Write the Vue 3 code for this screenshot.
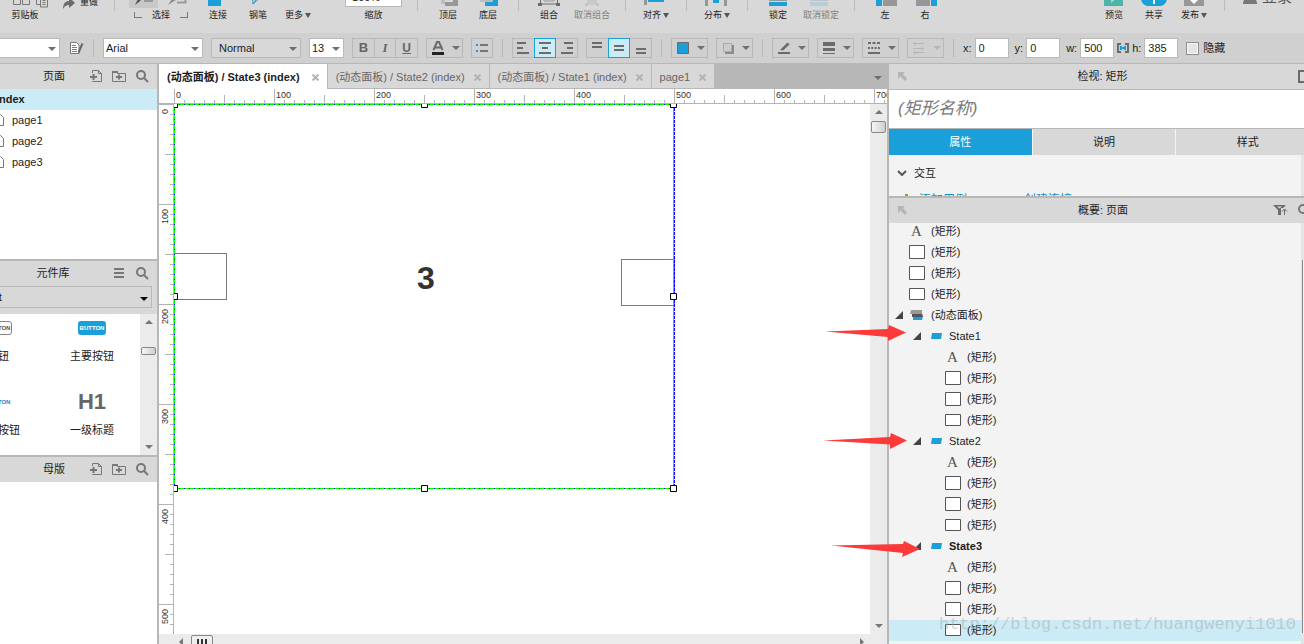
<script setup>
import { ref } from 'vue'

const BLUE = '#1b9fd9'
const GRAY = '#979797'
const DARK = '#6b6b6b'
const LIGHT = '#bdbdbd'

const drawTools = [
  { label: '连接', shapes: [{ d: 'M10 -12h13v18h-13z', fill: BLUE }] },
  { label: '钢笔', shapes: [{ d: 'M14 -10L15 4L23 -3L21 -10M15 4L20 -3', stroke: BLUE }] },
  { label: '更多', caret: true, shapes: [] },
]

const layerTools = [
  [
    { label: '顶层', shapes: [{ d: 'M13 -8h12v12h-12z', fill: LIGHT }, { d: 'M17 -8h13v14h-13z', fill: GRAY }, { d: 'M17 0h8v2h-8z', fill: '#d8d8d8' }] },
    { label: '底层', shapes: [{ d: 'M17 -8h13v14h-13z', fill: BLUE }, { d: 'M12 -8h13v10h-13z', fill: LIGHT }, { d: 'M14 -8h12v8h-12z', fill: GRAY }] },
  ],
  [
    { label: '组合', shapes: [{ d: 'M11.500 -10v14h17v-14', stroke: DARK }, { d: 'M9 3h4v3h-4zM27 3h4v3h-4z', fill: DARK }, { d: 'M15 -8h10v9h-10z', stroke: GRAY }] },
    { label: '取消组合', disabled: true, shapes: [{ d: 'M15 -6h10v11h-10z', fill: '#c9c9c9' }, { d: 'M13 3h3v3h-3zM24 3h3v3h-3z', fill: '#c3c3c3' }] },
  ],
  [{ label: '对齐', caret: true, shapes: [{ d: 'M8 -12h3v17h-3z', fill: GRAY }, { d: 'M12 -3h16v5h-16z', fill: BLUE }] }],
  [{ label: '分布', caret: true, shapes: [{ d: 'M8 -12h3v18h-3zM27 -12h3v18h-3z', fill: GRAY }, { d: 'M16 -8h6v11h-6z', fill: BLUE }] }],
  [
    { label: '锁定', shapes: [{ d: 'M11 -4h18v5h-18z', fill: GRAY }, { d: 'M11 2h18v4h-18z', fill: BLUE }] },
    { label: '取消锁定', disabled: true, shapes: [{ d: 'M9 -4h18v5h-18z', fill: '#c3c3c3' }, { d: 'M9 2h18v4h-18z', fill: '#b2cfdd' }] },
  ],
]

const dockTools = [
  { label: '左', shapes: [{ d: 'M11 -8h6v14h-6z', fill: BLUE }, { d: 'M18 -8h14v14h-14z', fill: GRAY }] },
  { label: '右', shapes: [{ d: 'M11 -8h14v14h-14z', fill: GRAY }, { d: 'M26 -8h6v14h-6z', fill: BLUE }] },
]

const publishTools = [
  { label: '预览', shapes: [{ d: 'M10 -12h19v18h-19z', fill: '#4eb3a8' }, { d: 'M17 -6l6 4l-6 5z', fill: '#a8d9d3' }] },
  { label: '共享', shapes: [{ d: 'M7 -2a8 8 0 0 1 26 0a7 8 0 0 1 -6 8h-14a7 8 0 0 1 -6 -8z', fill: BLUE }, { d: 'M19 -6h2v10h-2z', fill: '#fff' }] },
  { label: '发布', caret: true, shapes: [{ d: 'M10 -12h20v18h-20z', fill: GRAY }, { d: 'M15 -1h3v-5h4v5h3l-5 5z', fill: '#fff' }] },
]

const pages = ['page1', 'page2', 'page3']

const tabs = [
  { name: '(动态面板) / State3 (index)', active: true },
  { name: '(动态面板) / State2 (index)' },
  { name: '(动态面板) / State1 (index)' },
  { name: 'page1' },
]

const RULER = 2400
const range = (step) => Array.from({ length: RULER / step + 1 }, (_, i) => i * step)
const tickLength = (v) => (v % 100 === 0 ? 15 : v % 50 === 0 ? 9 : 4)
const topTicks = range(10).map((v) => `M${v} 15h1v-${tickLength(v)}h-1z`).join('')
const sideTicks = range(10).map((v) => `M15 ${v}v1h-${tickLength(v)}v-1z`).join('')
const marks = range(100)

const children = (level, selectLast) => [
  { level, icon: 'text', label: '(矩形)' },
  { level, icon: 'box', label: '(矩形)' },
  { level, icon: 'box', label: '(矩形)' },
  { level, icon: 'flat', label: '(矩形)', selected: selectLast },
]
const outline = [
  ...children(0),
  { level: 0, icon: 'panel', label: '(动态面板)', open: true },
  { level: 1, icon: 'state', label: 'State1', open: true },
  ...children(2),
  { level: 1, icon: 'state', label: 'State2', open: true },
  ...children(2),
  { level: 1, icon: 'state', label: 'State3', open: true, bold: true },
  ...children(2, true),
]

const geometry = ref({ x: '0', y: '0', w: '500', h: '385' })
const zoomLevel = ref('100%')
const widgetName = ref('')
const hidden = ref(false)
</script>

<template>
  <div class="app">
    <header class="tools">
      <button class="tool clip">
        <svg width="50" height="23" viewBox="0 -14 50 23">
          <path d="M13.500 -8v12.500h7v-12.500M22.500 -8v12.500h7v-12.500" fill="none" stroke="#777" />
          <path d="M36.500 -6v10.500h4M40.500 -4v11h7v-11M42.500 .5h3M42.500 2.500h3M42.500 4.500h3" fill="none" stroke="#777" />
        </svg>
        <span>剪贴板</span>
      </button>
      <button class="redo">
        <svg width="12" height="14" viewBox="0 0 12 14"><path d="M0 14c0-5 2-8 6-8V2l6 6l-6 5V10c-3 0-4 1-6 4z" fill="#6b6b6b" /></svg>
        <span>重做</span>
      </button>
      <i class="rule"></i>
      <button class="tool select-tool">
        <svg width="64" height="23" viewBox="0 -14 64 23">
          <path d="M0 -14h29v22h-29z" fill="#c8c8c8" />
          <path d="M6 5l3-6l-1-6l8 6l-4 1l-2 2z" fill="#555" />
          <path d="M15 -6h9v8h-9z" fill="#999" />
          <path d="M39 5l4-6v-6l7 6l-3 1l-2 1z" fill="#888" />
          <path d="M48 2.500h8.500v-6" fill="none" stroke="#999" stroke-width="2" />
        </svg>
        <span class="brackets"><i class="bracket"></i>选择<i class="bracket flip"></i></span>
      </button>
      <button v-for="t in drawTools" :key="t.label" class="tool">
        <svg width="40" height="23" viewBox="0 -14 40 23">
          <path v-for="(s, i) in t.shapes" :key="i" :d="s.d" :fill="s.fill || 'none'" :stroke="s.stroke || 'none'" />
        </svg>
        <span>{{ t.label }}<i v-if="t.caret" class="mini-caret"></i></span>
      </button>
      <label class="zoom">
        <input v-model="zoomLevel" />
        <span>缩放</span>
      </label>
      <template v-for="(group, g) in layerTools" :key="g">
        <i class="rule"></i>
        <button v-for="t in group" :key="t.label" class="tool" :class="{ disabled: t.disabled }" :disabled="t.disabled">
          <svg width="40" height="23" viewBox="0 -14 40 23">
            <path v-for="(s, i) in t.shapes" :key="i" :d="s.d" :fill="s.fill || 'none'" :stroke="s.stroke || 'none'" />
          </svg>
          <span>{{ t.label }}<i v-if="t.caret" class="mini-caret"></i></span>
        </button>
      </template>
      <i class="rule"></i>
      <button v-for="t in dockTools" :key="t.label" class="tool">
        <svg width="40" height="23" viewBox="0 -14 40 23">
          <path v-for="(s, i) in t.shapes" :key="i" :d="s.d" :fill="s.fill" />
        </svg>
        <span>{{ t.label }}</span>
      </button>
      <div class="publish">
        <button v-for="t in publishTools" :key="t.label" class="tool">
          <svg width="40" height="23" viewBox="0 -14 40 23">
            <path v-for="(s, i) in t.shapes" :key="i" :d="s.d" :fill="s.fill" />
          </svg>
          <span>{{ t.label }}<i v-if="t.caret" class="mini-caret"></i></span>
        </button>
        <i class="rule"></i>
        <button class="login">
          <svg width="14" height="14" viewBox="0 0 14 14"><circle cx="7" cy="3" r="4" fill="#777" /><path d="M0 13c0-5 3-6 7-6s7 1 7 6z" fill="#777" /></svg>
          <span>登录</span>
        </button>
      </div>
    </header>

    <div class="format">
      <span class="pick style-pick"><select aria-label="样式"><option></option></select></span>
      <button class="plain" aria-label="样式管理">
        <svg width="15" height="14" viewBox="0 0 15 14">
          <path d="M1.500 1.500h6l2.500 2.500v8.500h-8.500z" fill="#fff" stroke="#777" />
          <path d="M3 4.500h4M3 6.500h5M3 8.500h5M3 10.500h5" stroke="#1b9fd9" />
          <path d="M13.500 2.500l-4 9" stroke="#666" stroke-width="2" />
        </svg>
      </button>
      <i class="bar"></i>
      <span class="pick font"><select aria-label="字体"><option>Arial</option></select></span>
      <span class="pick weight"><select aria-label="字重"><option>Normal</option></select></span>
      <span class="pick size"><select aria-label="字号"><option>13</option></select></span>
      <div class="group letters">
        <button class="b">B</button>
        <button class="i">I</button>
        <button class="u">U</button>
      </div>
      <button class="drop" aria-label="文字颜色">
        <svg width="14" height="14" viewBox="0 0 14 14"><path d="M2.500 9L6 1h2l3.500 8M4 6.500h6" fill="none" stroke="#6b6b6b" stroke-width="2" /><path d="M1 11h12v3h-12z" fill="#222" /></svg>
        <i class="caret"></i>
      </button>
      <button class="square" aria-label="项目符号">
        <svg width="14" height="10" viewBox="0 0 14 10"><path d="M1 1h2v2h-2zM1 7h2v2h-2z" fill="#1b9fd9" /><path d="M5 1h8v2h-8zM5 7h8v2h-8z" fill="#777" /></svg>
      </button>
      <i class="bar"></i>
      <div class="group">
        <button aria-label="左对齐"><svg width="14" height="14" viewBox="0 0 14 14"><path d="M1 2h9M1 7h6M1 12h12" stroke="#6b6b6b" stroke-width="2" /></svg></button>
        <button class="on" aria-label="居中"><svg width="14" height="14" viewBox="0 0 14 14"><path d="M1 2h12M4 7h6M1 12h12" stroke="#6b6b6b" stroke-width="2" /></svg></button>
        <button aria-label="右对齐"><svg width="14" height="14" viewBox="0 0 14 14"><path d="M4 2h9M7 7h6M1 12h12" stroke="#6b6b6b" stroke-width="2" /></svg></button>
      </div>
      <div class="group">
        <button aria-label="顶部对齐"><svg width="12" height="14" viewBox="0 0 12 14"><path d="M1 2h10M1 6h10" stroke="#6b6b6b" stroke-width="2" /></svg></button>
        <button class="on" aria-label="垂直居中"><svg width="12" height="14" viewBox="0 0 12 14"><path d="M1 5h10M1 9h10" stroke="#6b6b6b" stroke-width="2" /></svg></button>
        <button aria-label="底部对齐"><svg width="12" height="14" viewBox="0 0 12 14"><path d="M1 8h10M1 12h10" stroke="#6b6b6b" stroke-width="2" /></svg></button>
      </div>
      <i class="bar"></i>
      <button class="drop" aria-label="填充">
        <svg width="14" height="14" viewBox="0 0 14 14"><path d="M1.500 1.500h11v11h-11z" fill="#1b9fd9" stroke="#6b6b6b" /></svg>
        <i class="caret"></i>
      </button>
      <button class="drop" aria-label="阴影">
        <svg width="14" height="14" viewBox="0 0 14 14"><path d="M4 4h9v9h-9z" fill="#8a8a8a" /><path d="M2.500 2.500h8v8h-8z" fill="#ccc" stroke="#aaa" /></svg>
        <i class="caret"></i>
      </button>
      <i class="bar"></i>
      <button class="drop" aria-label="线条颜色">
        <svg width="14" height="14" viewBox="0 0 14 14"><path d="M3 9L10.500 1.500l2 2L6 9.500z" fill="#6b6b6b" /><path d="M1 11h12v2h-12z" fill="#6b6b6b" /></svg>
        <i class="caret"></i>
      </button>
      <button class="drop" aria-label="线宽">
        <svg width="14" height="14" viewBox="0 0 14 14"><path d="M1 1h12v4h-12zM1 7h12v3h-12zM1 12h12v1h-12z" fill="#6b6b6b" /></svg>
        <i class="caret"></i>
      </button>
      <button class="drop" aria-label="线型">
        <svg width="14" height="14" viewBox="0 0 14 14"><path d="M1 2h12" stroke="#6b6b6b" stroke-width="2" stroke-dasharray="3 1.500" /><path d="M1 7h12" stroke="#6b6b6b" stroke-width="2" stroke-dasharray="2 1.300" /><path d="M1 12h12" stroke="#6b6b6b" stroke-width="2" /></svg>
        <i class="caret"></i>
      </button>
      <button class="drop off" aria-label="箭头" disabled>
        <svg width="14" height="14" viewBox="0 0 14 14"><path d="M1 2.500h11M1 7.500h11M1 11.500h11M3 .5v4M10 5.500v4M3 9.500v4" stroke="#b5b5b5" fill="none" /></svg>
        <i class="caret"></i>
      </button>
      <i class="bar"></i>
      <div class="coords">
        <label>x:<input v-model="geometry.x" /></label>
        <label>y:<input v-model="geometry.y" /></label>
        <label>w:<input v-model="geometry.w" /></label>
        <svg class="link" width="12" height="10" viewBox="0 0 12 10"><path d="M4 1h-3v8h3M8 1h3v8h-3" fill="none" stroke="#6b6b6b" stroke-width="2" /><path d="M3 3v4h2v-1h2v1h2v-4h-2v1h-2v-1z" fill="#1b9fd9" /></svg>
        <label>h:<input v-model="geometry.h" /></label>
      </div>
      <label class="hide"><input v-model="hidden" type="checkbox" />隐藏</label>
    </div>

    <main class="body">
      <aside class="left">
        <section class="pages">
          <div class="head">
            <h2>页面</h2>
            <button aria-label="添加页面"><svg width="14" height="14" viewBox="0 0 14 14"><path d="M3.500 4V1.500h6l3 3v8h-9V12M9.500 1.500v3h3" fill="none" stroke="#777" /><path d="M1 7h7v2h-7zM3.500 5h2v6h-2z" fill="#777" /></svg></button>
            <button aria-label="添加文件夹"><svg width="14" height="14" viewBox="0 0 14 14"><path d="M.5 2.500h5v2h8v8h-13z" fill="none" stroke="#777" /><path d="M.5 2h5v2h-5zM4 7h6v2h-6zM6 5.500h2v5h-2z" fill="#777" /></svg></button>
            <button aria-label="搜索"><svg width="14" height="14" viewBox="0 0 14 14"><circle cx="6" cy="6" r="4" fill="none" stroke="#777" stroke-width="2" /><path d="M9 9l4 4" stroke="#777" stroke-width="2" /></svg></button>
          </div>
          <ul>
            <li class="current">index</li>
            <li v-for="p in pages" :key="p">
              <svg width="10" height="12" viewBox="0 0 10 12"><path d="M1.500 .5h5l3 3v8h-8z" fill="#fff" stroke="#777" /></svg>{{ p }}
            </li>
          </ul>
        </section>
        <section class="library">
          <div class="head">
            <h2>元件库</h2>
            <button aria-label="选项"><svg width="14" height="14" viewBox="0 0 14 14"><path d="M2 3h10M2 7h10M2 11h10" stroke="#777" stroke-width="2" /></svg></button>
            <button aria-label="搜索"><svg width="14" height="14" viewBox="0 0 14 14"><circle cx="6" cy="6" r="4" fill="none" stroke="#777" stroke-width="2" /><path d="M9 9l4 4" stroke="#777" stroke-width="2" /></svg></button>
          </div>
          <div class="source"><span class="pick"><select aria-label="元件库"><option>Default</option></select></span></div>
          <div class="shelf">
            <div class="widgets">
              <figure><div><b class="chip ghost">BUTTON</b></div><figcaption>按钮</figcaption></figure>
              <figure><div><b class="chip">BUTTON</b></div><figcaption>主要按钮</figcaption></figure>
              <figure><div><b class="chip bare">BUTTON</b></div><figcaption>链接按钮</figcaption></figure>
              <figure><div><b class="h1">H1</b></div><figcaption>一级标题</figcaption></figure>
            </div>
            <div class="vscroll"><i class="up"></i><i class="thumb"></i><i class="down"></i></div>
          </div>
        </section>
        <section class="masters">
          <div class="head">
            <h2>母版</h2>
            <button aria-label="添加母版"><svg width="14" height="14" viewBox="0 0 14 14"><path d="M3.500 4V1.500h6l3 3v8h-9V12M9.500 1.500v3h3" fill="none" stroke="#777" /><path d="M1 7h7v2h-7zM3.500 5h2v6h-2z" fill="#777" /></svg></button>
            <button aria-label="添加文件夹"><svg width="14" height="14" viewBox="0 0 14 14"><path d="M.5 2.500h5v2h8v8h-13z" fill="none" stroke="#777" /><path d="M.5 2h5v2h-5zM4 7h6v2h-6zM6 5.500h2v5h-2z" fill="#777" /></svg></button>
            <button aria-label="搜索"><svg width="14" height="14" viewBox="0 0 14 14"><circle cx="6" cy="6" r="4" fill="none" stroke="#777" stroke-width="2" /><path d="M9 9l4 4" stroke="#777" stroke-width="2" /></svg></button>
          </div>
        </section>
      </aside>

      <section class="center">
        <nav class="tabs">
          <button v-for="t in tabs" :key="t.name" :class="{ active: t.active }">
            {{ t.name }}
            <svg width="7" height="7" viewBox="0 0 7 7"><path d="M0.500 0.500l6 6M6.500 0.500l-6 6" stroke="currentColor" stroke-width="2" /></svg>
          </button>
          <i class="caret more"></i>
        </nav>
        <div class="ruler-top">
          <svg :width="RULER" height="15">
            <path :d="topTicks" fill="#b4b4b4" />
            <text v-for="m in marks" :key="m" :x="m + 2" y="9">{{ m }}</text>
          </svg>
        </div>
        <div class="work">
          <div class="ruler-side">
            <svg width="15" :height="RULER">
              <path :d="sideTicks" fill="#b4b4b4" />
              <text v-for="m in marks" :key="m" text-anchor="end" :transform="`translate(9 ${m + 5}) rotate(-90)`">{{ m }}</text>
            </svg>
          </div>
          <div class="canvas">
            <div class="shape prev"></div>
            <div class="shape next"></div>
            <div class="digit">3</div>
            <svg class="selection" width="510" height="395">
              <path d="M0 .5H500M.5 0V385M0 384.500H500M499.500 0V385" fill="none" stroke="#00ff00" />
              <path d="M0 .5H500M.5 0V385M0 384.500H500" fill="none" stroke="#0000ff" stroke-dasharray="1 4" />
              <path d="M500.500 0V385" stroke="#0000ff" stroke-dasharray="3 1" />
              <g fill="#fff" stroke="#000">
                <path d="M-2.500 -2.500h6v6h-6zM247.500 -2.500h6v6h-6zM496.500 -2.500h6v6h-6z" />
                <path d="M-2.500 189.500h6v6h-6zM496.500 189.500h6v6h-6z" />
                <path d="M-2.500 381.500h6v6h-6zM247.500 381.500h6v6h-6zM496.500 381.500h6v6h-6z" />
              </g>
            </svg>
          </div>
          <div class="vscroll wide"><i class="up"></i><i class="thumb"></i><i class="down"></i></div>
        </div>
        <div class="hscroll">
          <i class="back"></i><i class="grip"></i><i class="forward"></i>
        </div>
      </section>

      <aside class="right">
        <div class="sheet">
          <section class="inspector">
            <div class="head">
              <svg width="9" height="9" viewBox="0 0 9 9"><path d="M0 0h7L5 2l4 4.500L7 9L2.500 4.500L0 7z" fill="#b5b5b5" /></svg>
              <h2>检视: 矩形</h2>
              <svg width="13" height="13" viewBox="0 0 13 13"><path d="M1 1h11v11h-11z" fill="none" stroke="#6b6b6b" stroke-width="2" /></svg>
            </div>
            <input v-model="widgetName" class="name" placeholder="(矩形名称)" aria-label="名称" />
            <div class="modes">
              <button class="active">属性</button>
              <button>说明</button>
              <button>样式</button>
            </div>
            <div class="props">
              <h3><svg width="10" height="6" viewBox="0 0 10 6"><path d="M1 1l4 4l4-4" fill="none" stroke="#555" stroke-width="2" /></svg>交互</h3>
              <div class="links">
                <i class="plus"></i>
                <a href="#">添加用例</a>
                <a href="#">创建连接</a>
              </div>
            </div>
          </section>
          <section class="outline">
            <div class="head">
              <svg width="9" height="9" viewBox="0 0 9 9"><path d="M0 0h7L5 2l4 4.500L7 9L2.500 4.500L0 7z" fill="#b5b5b5" /></svg>
              <h2>概要: 页面</h2>
              <svg width="15" height="12" viewBox="0 0 15 12"><path d="M0 1h13l-5 5v5h-3v-5z" fill="#6b6b6b" /><path d="M4 2.500h5l-2.500 2z" fill="#d8d8d8" /><path d="M8 4h6v8h-6z" fill="#d8d8d8" /><path d="M11.500 11V5M9 7.500l2.500-2.500l2.500 2.500" fill="none" stroke="#6b6b6b" /></svg>
              <svg width="14" height="14" viewBox="0 0 14 14"><circle cx="6" cy="6" r="4" fill="none" stroke="#777" stroke-width="2" /><path d="M9 9l4 4" stroke="#777" stroke-width="2" /></svg>
            </div>
            <div class="tree">
              <ul>
                <li v-for="(n, i) in outline" :key="i" :class="['level' + n.level, { selected: n.selected, bold: n.bold }]">
                  <svg class="fold" width="8" height="8" viewBox="0 0 8 8"><path v-if="n.open" d="M8 0v8h-8z" fill="#444" /></svg>
                  <svg class="icon" width="16" height="16" viewBox="0 0 16 16">
                    <text v-if="n.icon === 'text'" x="2" y="13" class="glyph">A</text>
                    <path v-else-if="n.icon === 'box'" d="M.5 1.500h15v13h-15z" fill="#fff" stroke="#555" />
                    <path v-else-if="n.icon === 'flat'" d="M.5 2.500h15v11h-15z" fill="#fff" stroke="#555" />
                    <path v-else-if="n.icon === 'state'" d="M5 5h10l-1 6h-10z" fill="#1b9fd9" />
                    <template v-else>
                      <path d="M4 9h10l-1 4h-9z" fill="#1b9fd9" />
                      <path d="M3 6h10l1 4h-11z" fill="#555" />
                      <path d="M2 3h11v4h-12z" fill="#999" />
                    </template>
                  </svg>
                  <span>{{ n.label }}</span>
                </li>
              </ul>
            </div>
          </section>
        </div>
        <i class="edge first"></i>
        <i class="edge second"></i>
        <div class="watermark">http://blog.csdn.net/huangwenyi1010</div>
      </aside>

      <svg class="arrows" width="100" height="240" viewBox="0 0 100 240" fill="#fc3a3a">
        <path d="M3 11.500L66 9L67 5L84 12.500L66 21L66 17z" />
        <path d="M1 120.500L68 117L69 113L85 120.500L68 129L68 124.500z" />
        <path d="M9 225.500L81 224L82 221L98 229L80 237L81 233z" />
      </svg>
    </main>
  </div>
</template>

<style>
html,
body {
  margin: 0;
  overflow: hidden;
}
</style>

<style scoped>
.app {
  display: flex;
  flex-direction: column;
  height: 100vh;
  overflow: hidden;
  background: #fff;
  color: #1c1c1c;
  font: 11px/14px "Liberation Sans", Arial, "Noto Sans CJK SC", sans-serif;
}
.app * {
  box-sizing: border-box;
}
button,
input,
select {
  margin: 0;
  padding: 0;
  border: 0;
  border-radius: 0;
  background: none;
  color: inherit;
  font: inherit;
  outline: none;
}
h2,
h3,
ul,
figure {
  margin: 0;
  padding: 0;
  font: inherit;
  list-style: none;
}
svg,
i {
  flex: none;
  display: block;
}

/* main toolbar */
.tools {
  flex: none;
  display: flex;
  align-items: flex-end;
  height: 33px;
  overflow: hidden;
  background: #d8d8d8;
  font-size: 9px;
  line-height: 12px;
}
.tool {
  flex: none;
  display: flex;
  flex-direction: column;
  align-items: center;
  min-width: 40px;
  padding-bottom: 12px;
  line-height: 12px;
  white-space: nowrap;
}
.tool.disabled {
  width: 46px;
  color: #808080;
}
.clip {
  width: 50px;
}
.redo {
  display: flex;
  align-items: center;
  gap: 5px;
  margin: 0 6px 24px 13px;
  line-height: 12px;
}
.rule {
  width: 1px;
  height: 25px;
  margin: 0 10px 22px;
  background: #bcbcbc;
}
.select-tool {
  margin: 0 5px 0 4px;
}
.brackets {
  display: flex;
  align-items: center;
  gap: 10px;
}
.bracket {
  width: 8px;
  height: 6px;
  border: solid #777;
  border-width: 0 0 1px 1px;
}
.bracket.flip {
  border-width: 0 1px 1px 0;
}
.mini-caret {
  display: inline-block;
  margin-left: 2px;
  border: solid transparent;
  border-width: 5px 3px 0;
  border-top-color: #555;
}
.zoom {
  display: flex;
  flex-direction: column;
  align-items: center;
  gap: 2px;
  margin: 0 5px 12px 27px;
}
.zoom input {
  width: 57px;
  height: 20px;
  padding: 0 6px;
  border: 1px solid #b7b7b7;
  background: #fff;
  font-size: 11px;
}
.publish {
  display: flex;
  align-items: flex-end;
  margin-left: auto;
}
.login {
  display: flex;
  align-items: flex-end;
  gap: 5px;
  width: 69px;
  margin-bottom: 28px;
  padding-left: 8px;
  color: #555;
  font-size: 15px;
  line-height: 16px;
  white-space: nowrap;
}

/* format bar */
.format {
  flex: none;
  display: flex;
  align-items: center;
  gap: 8px;
  height: 31px;
  border-bottom: 1px solid #b7b7b7;
  background: #d0d0d0;
}
.bar {
  width: 1px;
  height: 18px;
  margin: 0 1px;
  background: #b7b7b7;
}
.pick {
  flex: none;
  position: relative;
  display: block;
  height: 20px;
  border: 1px solid #b9b9b9;
  background: #fff;
}
.pick::after {
  content: "";
  position: absolute;
  top: 8px;
  right: 3px;
  border: solid transparent;
  border-width: 4px 4px 0;
  border-top-color: #6f6f6f;
  pointer-events: none;
}
.pick select {
  display: block;
  width: 100%;
  height: 18px;
  padding-left: 2px;
  appearance: none;
}
.style-pick {
  width: 60px;
  border-left: 0;
}
.format .plain {
  width: 15px;
  margin-left: 1px;
}
.font {
  width: 100px;
}
.weight {
  width: 90px;
  background: #d8d8d8;
}
.weight select {
  padding-left: 7px;
}
.size {
  width: 35px;
}
.group {
  flex: none;
  display: flex;
  width: 66px;
  height: 20px;
}
.group button {
  flex: 1;
  display: flex;
  align-items: center;
  justify-content: center;
  border: 1px solid #b9b9b9;
}
.group button + button {
  margin-left: -1px;
}
.group .on {
  z-index: 1;
  border-color: #1b9fd9;
  background: #cbebf7;
}
.letters {
  color: #666;
  font-size: 13px;
}
.letters .b {
  font-weight: bold;
}
.letters .i {
  font-family: "Liberation Serif", serif;
  font-style: italic;
  font-weight: bold;
}
.letters .u {
  font-weight: bold;
  font-size: 12px;
  text-decoration: underline;
}
.drop {
  flex: none;
  display: flex;
  align-items: center;
  justify-content: space-between;
  width: 37px;
  height: 20px;
  padding: 0 2px 0 4px;
  border: 1px solid #b9b9b9;
}
.caret {
  border: solid transparent;
  border-width: 4px 4px 0;
  border-top-color: #6f6f6f;
}
.off .caret {
  border-top-color: #b5b5b5;
}
.square {
  flex: none;
  display: flex;
  align-items: center;
  justify-content: center;
  width: 22px;
  height: 20px;
  border: 1px solid #b9b9b9;
}
.coords {
  display: flex;
  align-items: center;
  gap: 6px;
}
.coords label {
  display: flex;
  align-items: center;
  gap: 3px;
}
.coords input {
  width: 34px;
  height: 20px;
  padding-left: 3px;
  border: 1px solid #b9b9b9;
  background: #fff;
}
.link {
  margin: 0 -3px;
}
.hide {
  display: flex;
  align-items: center;
  gap: 4px;
  white-space: nowrap;
}
.hide input {
  width: 13px;
  height: 13px;
  border: 1px solid #8e8f8f;
  background: #e4e5e9;
  box-shadow: inset 0 0 0 1px #f6f6f6;
  appearance: none;
}

/* body */
.body {
  position: relative;
  flex: 1;
  display: flex;
  min-height: 0;
}
.left {
  flex: none;
  display: flex;
  flex-direction: column;
  width: 159px;
  border-right: 2px solid #b7b7b7;
  overflow: hidden;
}
.head {
  flex: none;
  display: flex;
  align-items: center;
  height: 25px;
  padding-bottom: 1px;
  background: #d8d8d8;
}
.left .head {
  gap: 9px;
  padding-right: 8px;
}
.left h2 {
  flex: 1;
  padding-left: 28px;
  text-align: center;
}
.library h2 {
  padding-left: 3px;
}
.pages {
  flex: none;
  height: 197px;
  border-bottom: 2px solid #b7b7b7;
}
.pages li {
  display: flex;
  align-items: center;
  gap: 8px;
  height: 21px;
  margin-left: -6px;
  padding-bottom: 1px;
}
.pages .current {
  padding-left: 2px;
  background: #cbebf7;
  font-weight: bold;
}
.library {
  flex: none;
  border-bottom: 2px solid #b7b7b7;
}
.source {
  height: 28px;
  padding-right: 5px;
  background: #d8d8d8;
}
.source .pick {
  height: 22px;
  margin-left: -36px;
  background: #d8d8d8;
}
.source .pick::after {
  top: 10px;
  border-top-color: #000;
}
.source select {
  height: 20px;
}
.shelf {
  display: flex;
  height: 141px;
}
.widgets {
  flex: none;
  display: grid;
  grid-template-columns: 94px 94px;
  grid-auto-rows: 74px;
  width: 189px;
  height: 141px;
  margin-left: -49px;
  overflow: hidden;
}
.widgets figure {
  text-align: center;
}
.widgets figure > div {
  display: flex;
  align-items: center;
  justify-content: center;
  height: 28px;
  margin-bottom: 7px;
}
.chip {
  width: 28px;
  height: 14px;
  border-radius: 3px;
  background: #1b9fd9;
  color: #fff;
  font-size: 6px;
  line-height: 14px;
}
.chip.ghost {
  border: 1px solid #888;
  background: #fff;
  color: #555;
  line-height: 12px;
}
.chip.bare {
  background: none;
  color: #2f7fc0;
}
.h1 {
  color: #666;
  font-size: 22px;
}
.vscroll {
  flex: 1;
  display: flex;
  flex-direction: column;
  align-items: center;
  padding: 6px 0;
  background: #ebebeb;
}
.up,
.down {
  border: solid transparent;
  border-width: 0 4px 4px;
  border-bottom-color: #777;
}
.down {
  margin-top: auto;
  border-width: 4px 4px 0;
  border-top-color: #777;
}
.thumb {
  width: 15px;
  height: 8px;
  margin-top: 23px;
  border: 1px solid #888;
  border-radius: 2px;
  background: linear-gradient(90deg, #f6f6f6, #cfcfcf);
}
.vscroll.wide {
  flex: none;
  width: 17px;
}
.wide .thumb {
  height: 12px;
  margin-top: 7px;
}

/* centre */
.center {
  flex: 1;
  display: flex;
  flex-direction: column;
  min-width: 0;
  overflow: hidden;
}
.tabs {
  flex: none;
  display: flex;
  height: 25px;
  background: #b7b7b7;
}
.tabs button {
  flex: none;
  display: flex;
  align-items: center;
  gap: 9px;
  height: 24px;
  margin-right: 1px;
  padding: 2px 8px 0;
  background: #d8d8d8;
  color: #666;
  white-space: nowrap;
}
.tabs button svg {
  color: #b3b3b3;
}
.tabs .active {
  gap: 12px;
  height: 25px;
  padding-bottom: 1px;
  background: #fff;
  color: #1c1c1c;
  font-weight: bold;
}
.more {
  margin: 12px 5px 0 auto;
  height: 4px;
}
.ruler-top {
  flex: none;
  height: 15px;
  padding-left: 15px;
  border-bottom: 1px solid #b4b4b4;
  overflow: hidden;
}
.ruler-top text,
.ruler-side text {
  fill: #333;
  font-size: 9px;
}
.work {
  flex: 1;
  display: flex;
  min-height: 0;
}
.ruler-side {
  flex: none;
  width: 15px;
  border-right: 1px solid #b4b4b4;
  overflow: hidden;
}
.canvas {
  position: relative;
  flex: 1;
  min-width: 0;
  overflow: hidden;
}
.shape {
  position: absolute;
  width: 54px;
  height: 47px;
  border: 1px solid #7a7a7a;
}
.prev {
  left: -1px;
  top: 149px;
}
.next {
  left: 447px;
  top: 155px;
}
.digit {
  position: absolute;
  left: 202px;
  top: 154px;
  width: 100px;
  color: #333;
  font-size: 32px;
  font-weight: bold;
  line-height: 40px;
  text-align: center;
}
.selection {
  position: absolute;
  left: 0;
  top: 0;
}
.hscroll {
  flex: none;
  display: flex;
  height: 10px;
  padding: 1px 23px 0 20px;
  background: #ebebeb;
  overflow: hidden;
}
.back,
.forward {
  margin-top: 3px;
  border: solid transparent;
  border-width: 4px 4px 4px 0;
  border-right-color: #777;
}
.forward {
  margin-left: auto;
  border-width: 4px 0 4px 4px;
  border-left-color: #777;
}
.grip {
  width: 22px;
  height: 15px;
  margin-left: 8px;
  padding: 3px 5px;
  border: 1px solid #888;
  border-radius: 2px;
  background: repeating-linear-gradient(90deg, #333 0 2px, #eee 2px 4px) content-box, #eee;
}

/* right */
.right {
  position: relative;
  flex: none;
  width: 417px;
  border-left: 2px solid #b7b7b7;
  overflow: hidden;
}
.sheet {
  display: flex;
  flex-direction: column;
  height: 100%;
  margin-right: -15px;
  background: #f3f3f3;
}
.right .head {
  gap: 9px;
  padding: 0 8px 1px 9px;
}
.right h2 {
  flex: 1;
  text-align: center;
}
.inspector {
  flex: none;
  height: 134px;
  border-bottom: 2px solid #b7b7b7;
  overflow: hidden;
}
.inspector .head {
  height: 26px;
  border-bottom: 1px solid #b7b7b7;
}
.name {
  display: block;
  width: 100%;
  height: 39px;
  padding-left: 9px;
  border-bottom: 1px solid #b7b7b7;
  background: #fff;
  font-size: 17px;
  font-style: italic;
}
.name::placeholder {
  color: #7a7a7a;
}
.modes {
  display: flex;
  gap: 1px;
  height: 26px;
}
.modes button {
  flex: 1;
  background: #d8d8d8;
}
.modes .active {
  background: #1b9fd9;
  color: #fff;
}
.props h3 {
  display: flex;
  align-items: center;
  gap: 7px;
  height: 36px;
  padding-left: 8px;
}
.links {
  display: flex;
  padding: 1px 0 0 16px;
  font-size: 12px;
  line-height: 16px;
}
.plus {
  width: 3px;
  height: 11px;
  margin: 2px 11px 0 0;
  background: #6fb52c;
}
.links a {
  width: 105px;
  color: #0f8fc2;
  text-decoration: none;
}
.outline {
  flex: 1;
  display: flex;
  flex-direction: column;
  min-height: 0;
}
.outline .head {
  height: 25px;
}
.outline h2 {
  padding-left: 26px;
}
.tree {
  flex: 1;
  min-height: 0;
  overflow: hidden;
}
.tree ul {
  margin-top: -2px;
}
.tree li {
  display: flex;
  align-items: center;
  height: 21px;
  padding: 0 0 1px 6px;
}
.tree .level1 {
  padding-left: 24px;
}
.tree .level2 {
  padding-left: 42px;
}
.tree .selected {
  background: #cbebf7;
}
.tree .bold {
  font-weight: bold;
}
.icon {
  margin: 0 6px;
}
.glyph {
  fill: #555;
  font: 15px "Liberation Serif", serif;
}
.edge {
  position: absolute;
  right: 0;
  width: 3px;
  background: #e4e4e4;
}
.first {
  top: 91px;
  height: 41px;
}
.second {
  top: 159px;
  bottom: 0;
}
.second::after {
  content: "";
  position: absolute;
  left: 1px;
  top: 37px;
  bottom: 11px;
  width: 2px;
  border-left: 1px solid #888;
  background: #f3f3f3;
}
.watermark {
  position: absolute;
  right: 8px;
  bottom: 7px;
  color: rgba(170, 170, 165, 0.5);
  font: 17px/24px "Liberation Mono", monospace;
  white-space: nowrap;
  pointer-events: none;
}
.arrows {
  position: absolute;
  top: 256px;
  right: 382px;
  pointer-events: none;
}
</style>
